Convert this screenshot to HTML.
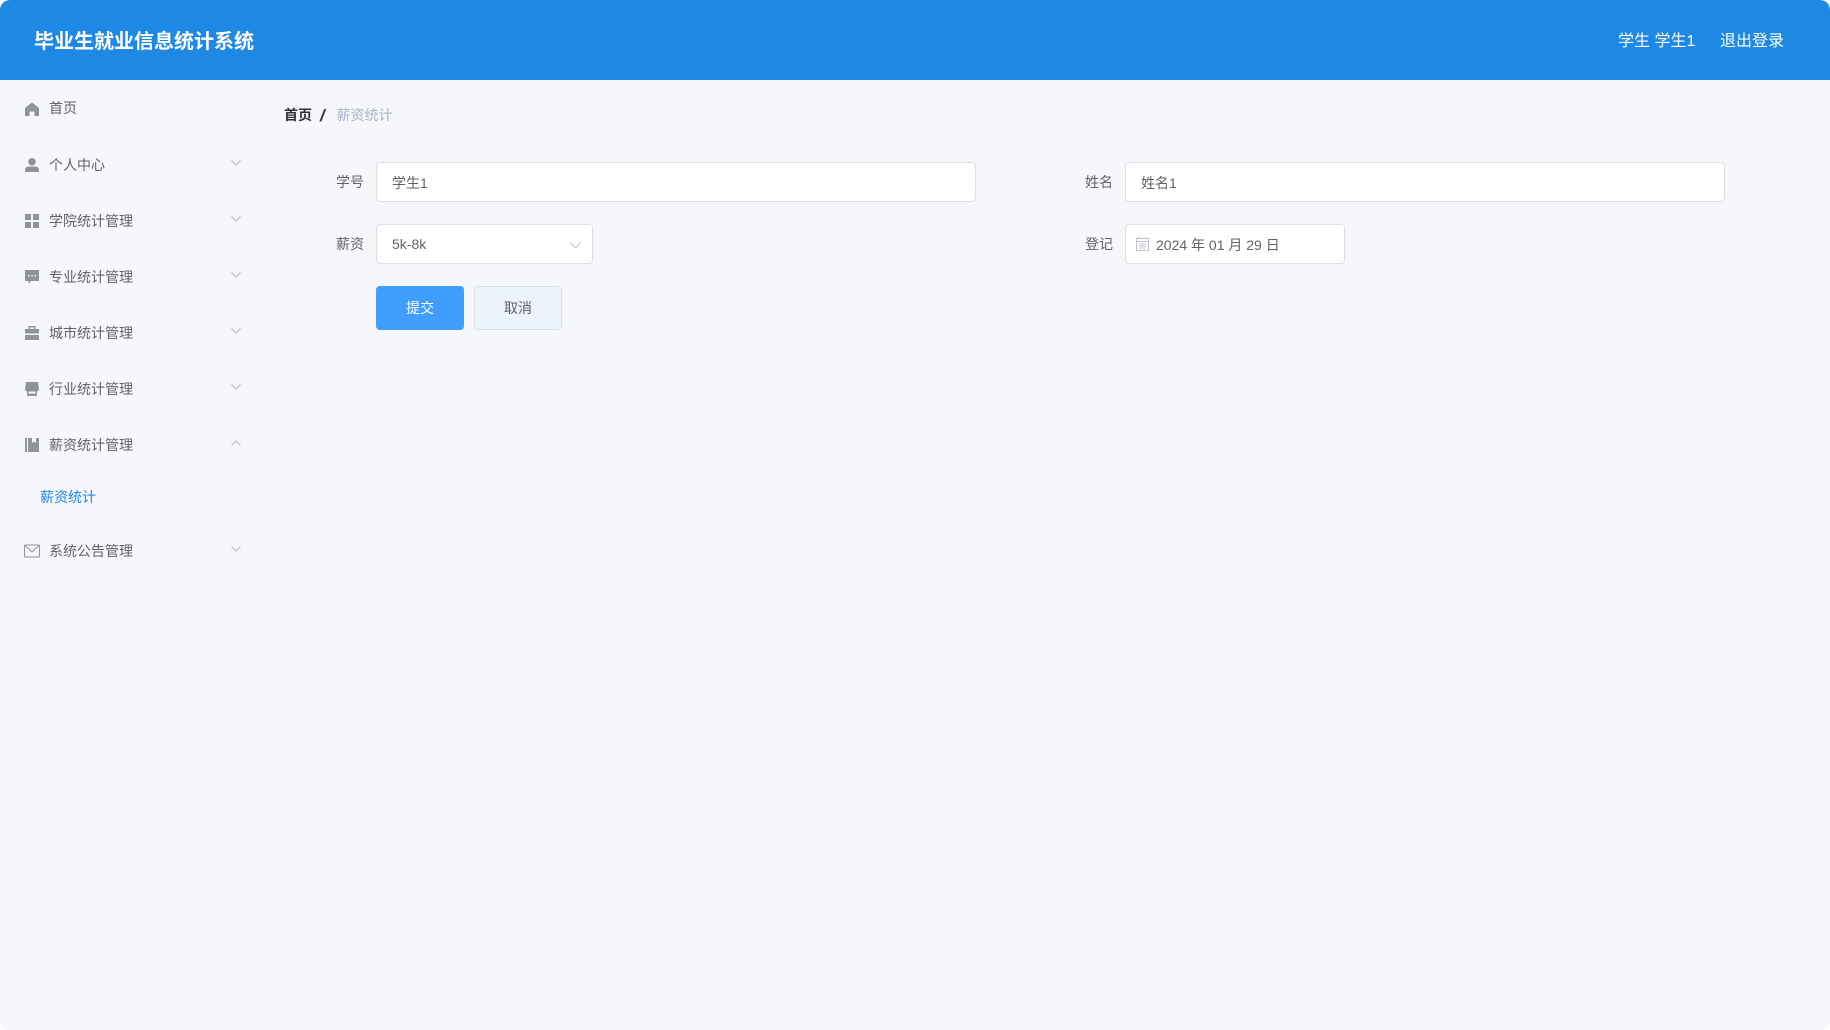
<!DOCTYPE html>
<html lang="zh">
<head>
<meta charset="utf-8">
<title>毕业生就业信息统计系统</title>
<style>
*{box-sizing:border-box;margin:0;padding:0}
html,body{width:1830px;height:1030px;overflow:hidden;background:#fff}
body{font-family:"Liberation Sans","Noto Sans CJK SC",sans-serif;font-size:14px;color:#606266}
#app{position:absolute;left:0;top:0;width:1830px;height:1030px;background:#f5f7fb;border-radius:10px;overflow:hidden}
.abs{position:absolute;white-space:nowrap}
#hd{position:absolute;left:0;top:0;width:1830px;height:80px;background:#1e88e5}
#main{position:absolute;left:260px;top:80px;width:1570px;height:950px;background:#f6f7fb}
.panel{position:absolute;left:284px;width:1522px;background:#f5f7fa}
.t{position:absolute;white-space:nowrap;line-height:20px;height:20px}
.m{left:49px;color:#606266}
.ic{position:absolute;left:25px;width:14px;height:14px;fill:#909399}
.ch{position:absolute;left:231px;width:10px;height:6px;fill:none;stroke:#b4b7bd;stroke-width:1}
.box{position:absolute;background:#fff;border:1px solid #dcdfe6;border-radius:4px}
.lb{color:#606266}
</style>
</head>
<body>
<div id="app">
<div id="main"></div>
<div class="panel" style="top:90px;height:50px"></div>
<div class="panel" style="top:149px;height:213px"></div>
<div id="hd"></div>
<div class="t" style="left:34px;top:28px;height:28px;line-height:28px;font-size:20px;font-weight:700;color:#fff">毕业生就业信息统计系统</div>
<div class="t" style="left:1618px;top:32px;font-size:16px;color:#fff;line-height:20px">学生 学生1</div>
<div class="t" style="left:1720px;top:32px;font-size:16px;color:#fff;line-height:20px">退出登录</div>

<svg class="ic" style="top:102px" viewBox="0 0 14 14"><path d="M7 0.5 L14 6 V14 H9.5 V9.5 H4.5 V14 H0 V6 Z"/></svg>
<div class="t m" style="top:98px">首页</div>

<svg class="ic" style="top:158px" viewBox="0 0 14 14"><circle cx="7" cy="3.8" r="3.8"/><path d="M0 14 V11.5 C0 9.5 2 8.6 3.5 8.6 H10.5 C12 8.6 14 9.5 14 11.5 V14 Z"/></svg>
<div class="t m" style="top:155px">个人中心</div>
<svg class="ch" style="top:160px" viewBox="0 0 10 6"><path d="M.5.5 5 5 9.500.5"/></svg>

<svg class="ic" style="top:214px" viewBox="0 0 14 14"><path d="M0 0H6V6H0ZM8 0H14V6H8ZM0 8H6V14H0ZM8 8H14V14H8Z"/></svg>
<div class="t m" style="top:211px">学院统计管理</div>
<svg class="ch" style="top:216px" viewBox="0 0 10 6"><path d="M.5.5 5 5 9.500.5"/></svg>

<svg class="ic" style="top:270px" viewBox="0 0 14 14"><path fill-rule="evenodd" d="M0 0H14V11H6L3.500 14V11H0ZM3 5V6.500H4.500V5ZM6.300 5V6.500H7.800V5ZM9.600 5V6.500H11.100V5Z"/></svg>
<div class="t m" style="top:267px">专业统计管理</div>
<svg class="ch" style="top:272px" viewBox="0 0 10 6"><path d="M.5.5 5 5 9.500.5"/></svg>

<svg class="ic" style="top:326px" viewBox="0 0 14 14"><path fill-rule="evenodd" d="M3.500 3V0H10.500V3H14V7.500H0V3ZM5 3H9V1.500H5ZM0 9H14V14H0Z"/></svg>
<div class="t m" style="top:323px">城市统计管理</div>
<svg class="ch" style="top:328px" viewBox="0 0 10 6"><path d="M.5.5 5 5 9.500.5"/></svg>

<svg class="ic" style="top:382px" viewBox="0 0 14 14"><path fill-rule="evenodd" d="M1 0H13L14 7C14 8.500 13 9 12 9V14H2V9C1 9 0 8.500 0 7ZM3.500 9.500V11.500H10.500V9.500Z"/></svg>
<div class="t m" style="top:379px">行业统计管理</div>
<svg class="ch" style="top:384px" viewBox="0 0 10 6"><path d="M.5.5 5 5 9.500.5"/></svg>

<svg class="ic" style="top:438px" viewBox="0 0 14 14"><path d="M0 0H2V14H0ZM3 0H7V5L9 3.500 11 5V0H14V14H3Z"/></svg>
<div class="t m" style="top:435px">薪资统计管理</div>
<svg class="ch" style="top:440px" viewBox="0 0 10 6"><path d="M.5 5.500 5 1 9.500 5.500"/></svg>

<div class="t" style="left:40px;top:487px;color:#1e88e5">薪资统计</div>

<svg class="ic" style="top:544px;left:24px;width:16px;height:14px;fill:none;stroke:#909399;stroke-width:1" viewBox="0 0 16 14"><rect x=".5" y="1" width="15" height="12" rx="1"/><path d="M1 1.500 8 8 15 1.500"/></svg>
<div class="t m" style="top:541px">系统公告管理</div>
<svg class="ch" style="top:546px" viewBox="0 0 10 6"><path d="M.5.5 5 5 9.500.5"/></svg>

<div class="t" style="left:284px;top:105px;font-weight:700;color:#303133">首页</div>
<div class="t" style="left:320px;top:106px;font-size:17px;font-style:italic;font-weight:700;color:#303133">/</div>
<div class="t" style="left:336.500px;top:105px;color:#a8b4c4">薪资统计</div>

<div class="t lb" style="left:336px;top:172px">学号</div>
<div class="box" style="left:376px;top:162px;width:600px;height:40px"></div>
<div class="t" style="left:392px;top:173px">学生1</div>

<div class="t lb" style="left:1085px;top:172px">姓名</div>
<div class="box" style="left:1125px;top:162px;width:600px;height:40px"></div>
<div class="t" style="left:1141px;top:173px">姓名1</div>

<div class="t lb" style="left:336px;top:234px">薪资</div>
<div class="box" style="left:376px;top:224px;width:217px;height:40px"></div>
<div class="t" style="left:392px;top:234px">5k-8k</div>
<svg class="abs" style="left:570px;top:242px;width:11px;height:7px;fill:none;stroke:#c0c4cc;stroke-width:1" viewBox="0 0 11 7"><path d="M.5.500 5.500 6 10.500.500"/></svg>

<div class="t lb" style="left:1085px;top:234px">登记</div>
<div class="box" style="left:1125px;top:224px;width:220px;height:40px"></div>
<svg class="abs" style="left:1136px;top:237px;width:13px;height:14px;fill:none;stroke:#c0c4cc;stroke-width:1" viewBox="0 0 13 14"><rect x=".5" y="1.500" width="12" height="12"/><path d="M.5 4.500H12.500M3 0V2M10 0V2M3 7H10M3 9H10M3 11H10" /></svg>
<div class="t" style="left:1156px;top:235px">2024 年 01 月 29 日</div>

<div class="abs" style="left:376px;top:286px;width:88px;height:44px;background:#409eff;border-radius:4px;color:#fff;text-align:center;line-height:44px">提交</div>
<div class="abs" style="left:474px;top:286px;width:88px;height:44px;background:#ecf3fd;border:1px solid #dcdfe6;border-radius:4px;color:#606266;text-align:center;line-height:42px">取消</div>
</div>
</body>
</html>
